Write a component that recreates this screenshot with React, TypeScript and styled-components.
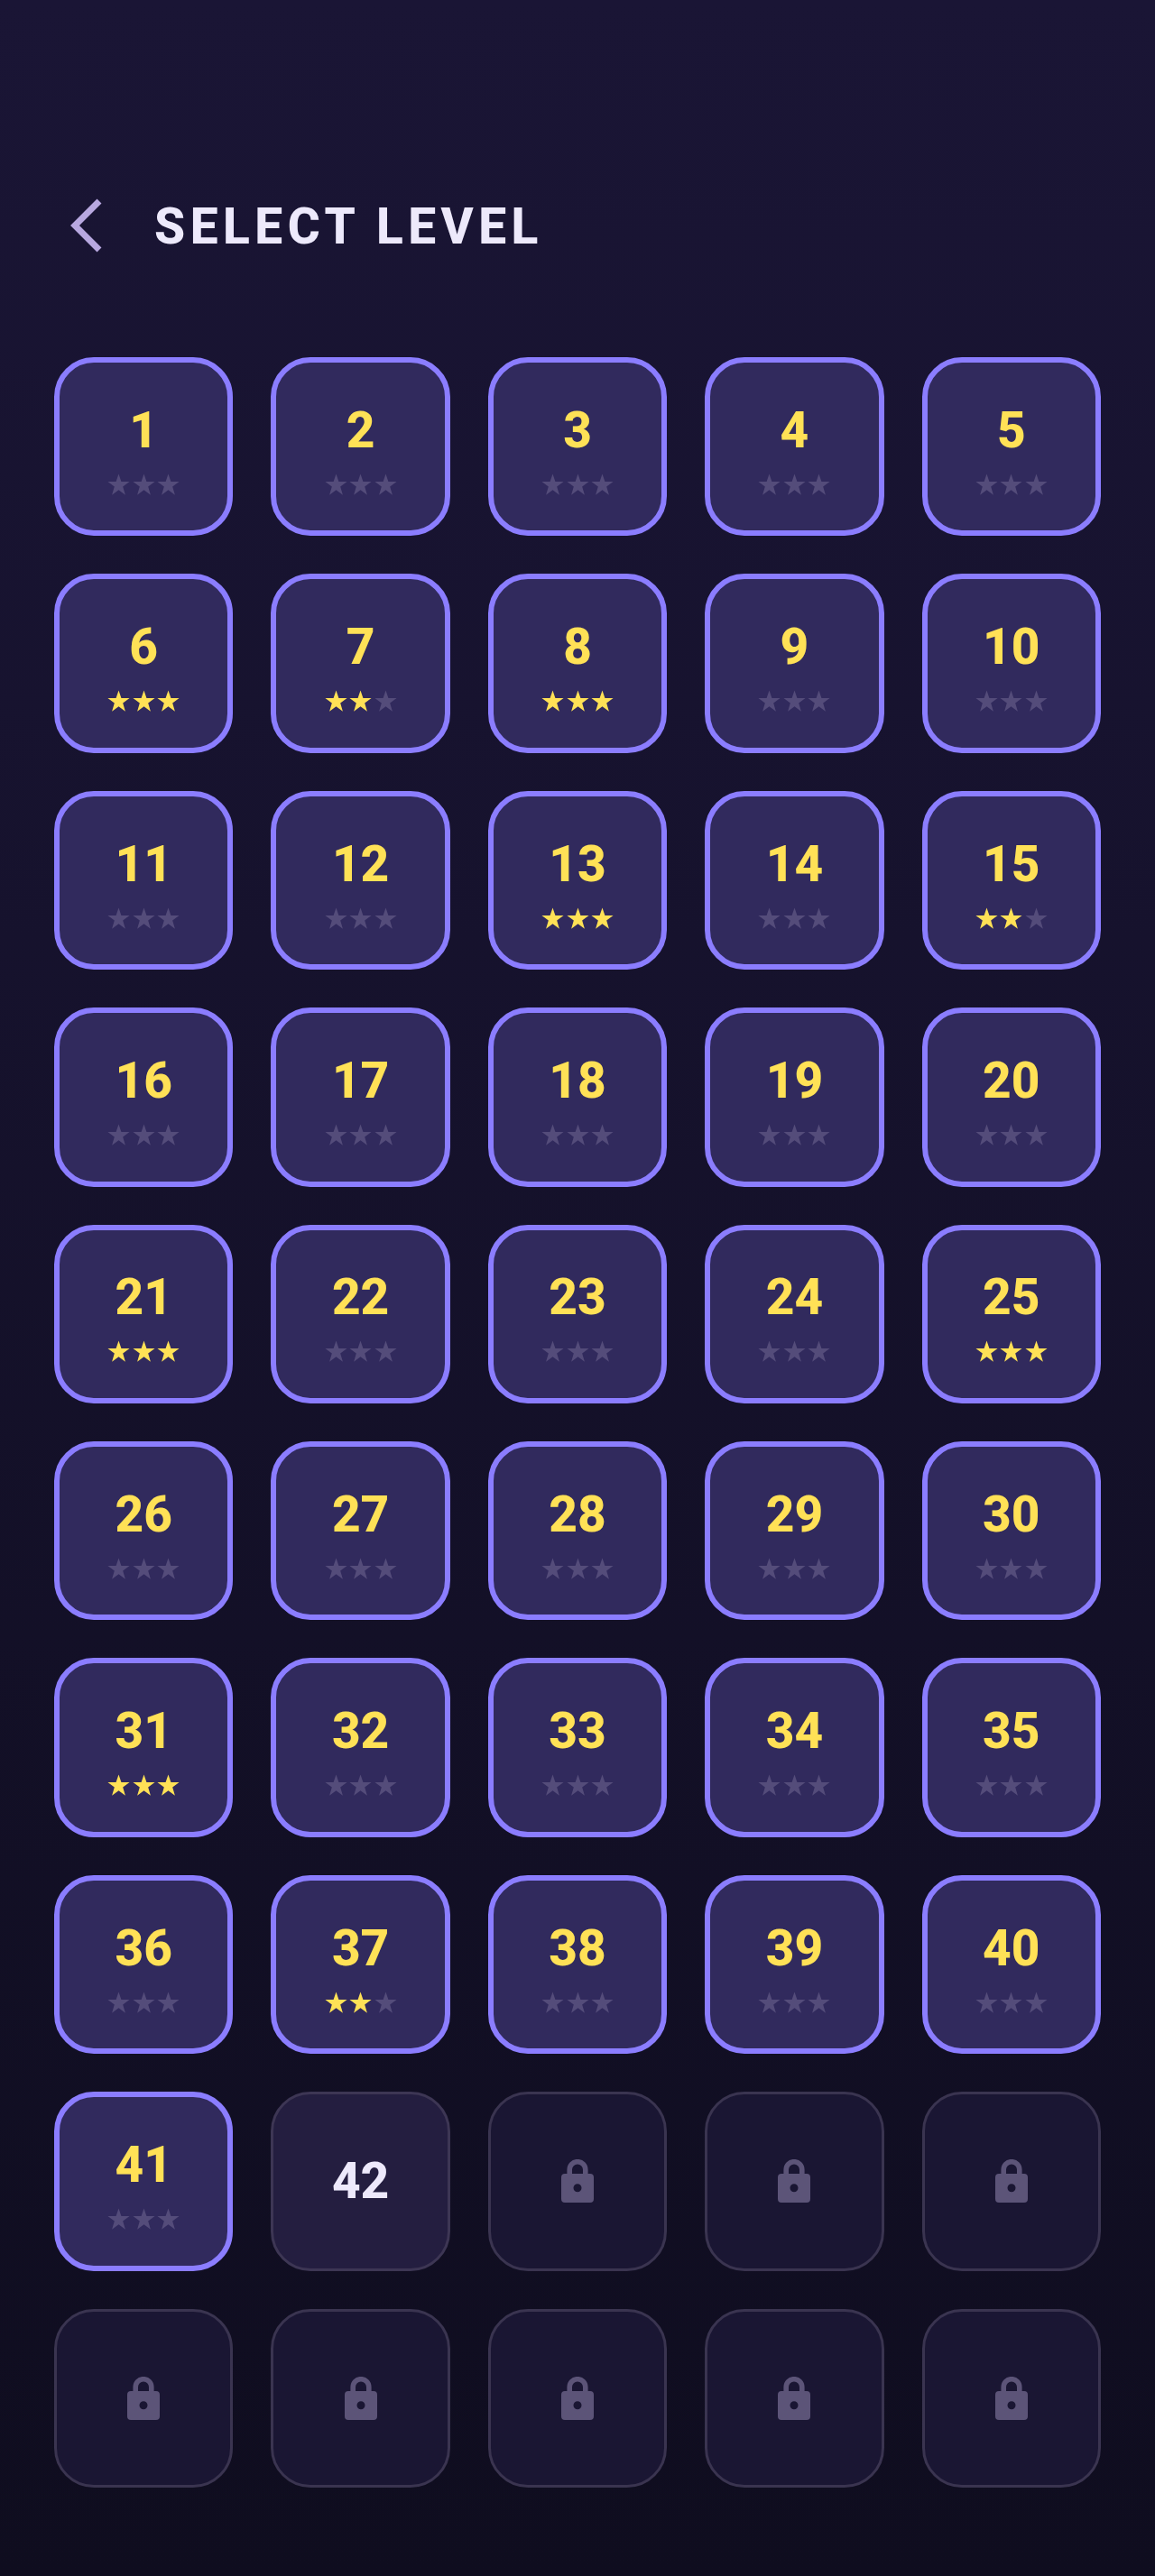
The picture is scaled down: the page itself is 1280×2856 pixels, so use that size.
import React from 'react';
import styled, { createGlobalStyle } from 'styled-components';

type LevelState = 'open' | 'current' | 'locked';

interface Level {
  id: number;
  state: LevelState;
  stars: number;
}

const earnedStars: Record<number, number> = {
  6: 3,
  7: 2,
  8: 3,
  13: 3,
  15: 2,
  21: 3,
  25: 3,
  31: 3,
  37: 2,
};

const levels: Level[] = Array.from({ length: 50 }, (_, i) => {
  const id = i + 1;
  const state: LevelState = id < 42 ? 'open' : id === 42 ? 'current' : 'locked';
  return { id, state, stars: earnedStars[id] || 0 };
});

function Star(props: { filled: boolean }) {
  return (
    <StarIcon viewBox='0 0 24 24' $filled={props.filled}>
      <polygon points='12,0.5 14.8,8.6 23.6,8.6 16.5,14 19.1,22.8 12,17.6 4.9,22.8 7.5,14 0.4,8.6 9.2,8.6' />
    </StarIcon>
  );
}

function Lock() {
  return (
    <LockIcon viewBox='0 0 36 48'>
      <path
        d='M9.2 17V11.5a8.8 8.8 0 0 1 17.6 0V17'
        fill='none'
        stroke='currentColor'
        strokeWidth='5.6'
      />
      <path
        fillRule='evenodd'
        fill='currentColor'
        d='M4 16h28a4 4 0 0 1 4 4v24a4 4 0 0 1-4 4H4a4 4 0 0 1-4-4V20a4 4 0 0 1 4-4zM18 27.2a4.5 4.5 0 1 0 0 9a4.5 4.5 0 1 0 0-9z'
      />
    </LockIcon>
  );
}

function App() {
  return (
    <Screen>
      <GlobalStyle />
      <Header>
        <BackButton aria-label='Back'>
          <svg width='40' height='64' viewBox='0 0 40 64'>
            <polyline
              points='35,5 8,32 35,59'
              fill='none'
              stroke='currentColor'
              strokeWidth='7'
            />
          </svg>
        </BackButton>
        <Title>SELECT LEVEL</Title>
      </Header>

      <Grid>
        {levels.map((level) => (
          <Tile key={level.id} $state={level.state}>
            {level.state === 'locked' ? (
              <Lock />
            ) : (
              <>
                <Number $state={level.state}>{level.id}</Number>
                {level.state === 'open' && (
                  <Stars>
                    {[0, 1, 2].map((n) => (
                      <Star key={n} filled={n < level.stars} />
                    ))}
                  </Stars>
                )}
              </>
            )}
          </Tile>
        ))}
      </Grid>
    </Screen>
  );
}

const GlobalStyle = createGlobalStyle`
  html, body {
    margin: 0;
    padding: 0;
    background: #0f0d1f;
  }
  * {
    box-sizing: border-box;
  }
`;

const Screen = styled.div`
  width: 1280px;
  height: 2856px;
  padding: 195px 60px 0;
  font-family: Roboto, 'Liberation Sans', sans-serif;
  background: linear-gradient(180deg, #1a1535 0%, #0f0d1f 100%);
`;

const Header = styled.header`
  display: flex;
  align-items: center;
  height: 110px;
  margin-bottom: 91px;
`;

const BackButton = styled.button`
  display: flex;
  align-items: center;
  width: 111px;
  height: 110px;
  margin: 0;
  padding: 0 0 0 15px;
  border: 0;
  background: none;
  color: #b8a8e0;
`;

const Title = styled.h1`
  margin: 2px 0 0;
  color: #ede9fb;
  font-size: 55px;
  font-weight: 800;
  line-height: 64px;
  letter-spacing: 5.5px;
`;

const Grid = styled.div`
  display: grid;
  grid-template-columns: repeat(5, 1fr);
  gap: 42px;
`;

const tileLook = {
  open: 'border: 6px solid #8b7dff; background: #312a5d;',
  current: 'border: 3px solid #3d3654; background: #241e40;',
  locked: 'border: 3px solid #3a3450; background: #1a1633;',
};

const Tile = styled.div<{ $state: LevelState }>`
  display: flex;
  flex-direction: column;
  align-items: center;
  justify-content: center;
  aspect-ratio: 1;
  border-radius: 44px;
  ${(props) => tileLook[props.$state]}
`;

const Number = styled.div<{ $state: LevelState }>`
  color: ${(props) => (props.$state === 'open' ? '#ffe156' : '#ede9fb')};
  font-size: 55px;
  font-weight: 800;
  line-height: 64px;
`;

const Stars = styled.div`
  display: flex;
  gap: 2.5px;
  margin: 16px 0 -4px;
`;

const StarIcon = styled.svg<{ $filled: boolean }>`
  display: block;
  width: 25px;
  height: 25px;
  fill: ${(props) => (props.$filled ? '#ffe156' : '#544c7a')};
`;

const LockIcon = styled.svg`
  display: block;
  width: 36px;
  height: 48px;
  color: #5c5478;
`;

export default App;
